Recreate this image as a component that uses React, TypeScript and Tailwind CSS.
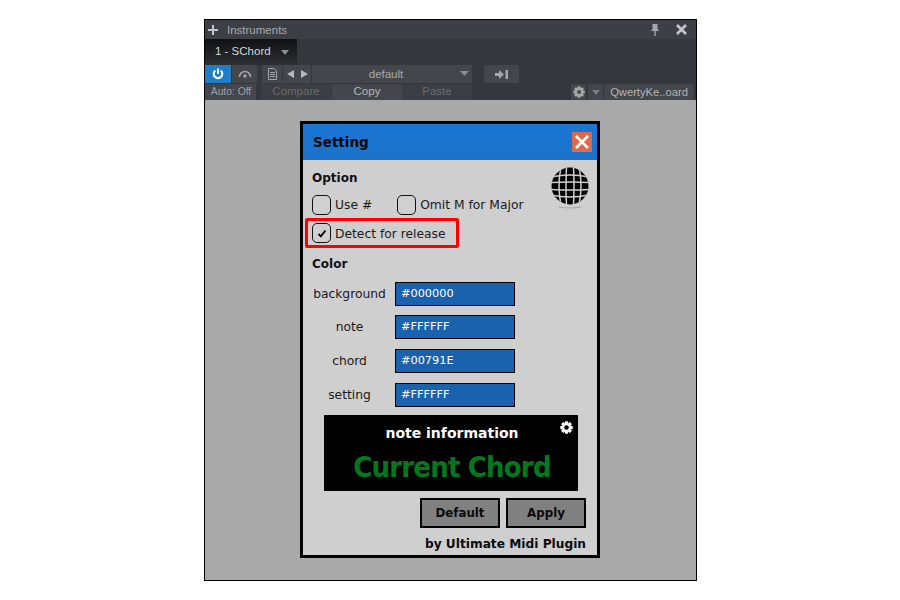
import React from 'react';

const ui = "font-['Liberation_Sans',Arial,sans-serif]";
const dv = "font-['DejaVu_Sans',Verdana,sans-serif]";

function Gear({ size, color }: { size: number; color: string }) {
  const teeth = [0, 45, 90, 135];
  return (
    <svg width={size} height={size} viewBox="0 0 24 24">
      {teeth.map((a) => (
        <rect key={a} x="9" y="0.5" width="6" height="23" rx="0.8" fill={color} transform={`rotate(${a} 12 12)`} />
      ))}
      <circle cx="12" cy="12" r="8.5" fill={color} />
      <circle cx="12" cy="12" r="4.2" fill="#000" fillOpacity={color === '#fff' ? 1 : 0.55} />
    </svg>
  );
}

function Globe() {
  return (
    <svg width="38" height="46" viewBox="0 0 38 46">
      <defs>
        <clipPath id="ball">
          <circle cx="19" cy="19" r="18.5" />
        </clipPath>
        <linearGradient id="refl" x1="0" y1="0" x2="0" y2="1">
          <stop offset="0" stopColor="#9a9a9a" />
          <stop offset="1" stopColor="#cfcfcf" />
        </linearGradient>
      </defs>
      <circle cx="19" cy="19" r="18.5" fill="#000" />
      <g clipPath="url(#ball)" fill="none" stroke="#cfcfcf" strokeWidth="1.500">
        <path d="M15.500 0Q14.500 19 15.500 38M22.500 0Q23.500 19 22.500 38" />
        <path d="M10 0Q6 19 10 38M28 0Q32 19 28 38" />
        <path d="M0 15.500Q19 14.500 38 15.500M0 22.500Q19 23.500 38 22.500" />
        <path d="M0 10Q19 6 38 10M0 28Q19 32 38 28" />
      </g>
      <path d="M8 40C14 41.500 24 41.500 30 40M11 43C16 44 22 44 27 43" stroke="url(#refl)" strokeWidth="1" fill="none" />
    </svg>
  );
}

function Check({ label, checked }: { label: string; checked?: boolean }) {
  return (
    <div className="flex items-center gap-[4px]">
      <div className="w-[19px] h-[20px] rounded-[5px] border border-[#111] bg-[#d0d0d0] flex items-center justify-center">
        {checked && (
          <svg width="10" height="9" viewBox="0 0 10 9">
            <path d="M1.500 5L3.800 7.300L8.500 1.500" stroke="#000" strokeWidth="1.800" fill="none" />
          </svg>
        )}
      </div>
      <span className="text-[12.3px] leading-[20px] pt-[1px] text-[#1a1a1a]">{label}</span>
    </div>
  );
}

function ColorRow({ label, value, mb }: { label: string; value: string; mb: string }) {
  return (
    <div className={`flex items-center ${mb}`}>
      <div className="w-[83px] pr-[8px] text-center text-[12.3px] text-[#1a1a1a]">{label}</div>
      <div className="w-[120px] h-[24px] bg-[#1a62ad] border border-black pl-[5px] pt-[1px] flex items-center text-[11.3px] text-white">
        {value}
      </div>
    </div>
  );
}

export default function App() {
  return (
    <div className="w-[900px] h-[600px] bg-white pt-[19px] pl-[204px] overflow-hidden">
      <div className={`w-[493px] h-[562px] border border-black flex flex-col bg-[#a9a9a9] ${ui}`}>
        {/* title bar */}
        <div className="h-[19px] bg-[#3c3f43] flex items-center pl-[3px] pr-[9px] text-[11.500px] text-[#a8abae]">
          <svg width="10" height="10" viewBox="0 0 10 10" className="mt-[1px]">
            <path d="M5 0V10M0 5H10" stroke="#c4c6c8" strokeWidth="2" />
          </svg>
          <span className="ml-[9px] mt-[2px]">Instruments</span>
          <svg width="10" height="12" viewBox="0 0 10 12" className="ml-auto mr-[16px]">
            <path d="M2.500 0H7.500V5L9 7H1L2.500 5ZM4.300 7H5.700V12H4.300Z" fill="#a5a7a9" />
          </svg>
          <svg width="11" height="11" viewBox="0 0 11 11">
            <path d="M1 1L10 10M10 1L1 10" stroke="#c4c6c8" strokeWidth="2.600" />
          </svg>
        </div>
        {/* tab row */}
        <div className="h-[26px] bg-[#34373b] flex items-start">
          <div className="w-[92px] h-[26px] bg-gradient-to-b from-[#111214] to-[#2c2f33] flex items-center pl-[10px] text-[11.500px] text-[#d8d9da]">
            1 - SChord
            <svg width="8" height="5" viewBox="0 0 8 5" className="ml-[10px]">
              <path d="M0 0H8L4 5Z" fill="#8b8d90" />
            </svg>
          </div>
        </div>
        {/* toolbar */}
        <div className="h-[18px] bg-[#34373b] flex items-stretch text-[11.500px] text-[#a8abae]">
          <div className="w-[26px] bg-[#1e7ec8] flex items-center justify-center">
            <svg width="12" height="12" viewBox="0 0 12 12" fill="none" stroke="#fff" strokeWidth="2">
              <path d="M6 0.500V6" />
              <path d="M3.300 2.500A4.300 4.300 0 1 0 8.700 2.500" />
            </svg>
          </div>
          <div className="w-[25px] ml-[1px] bg-[#43464a] flex items-center justify-center">
            <svg width="14" height="8" viewBox="0 0 14 8" fill="none">
              <path d="M1.500 7A5.500 5.500 0 0 1 12.500 7" stroke="#a5a7a9" strokeWidth="1.600" />
              <circle cx="7" cy="6" r="1.700" fill="#a5a7a9" />
            </svg>
          </div>
          <div className="w-[20px] ml-[5px] bg-[#43464a] flex items-center justify-center">
            <svg width="9" height="12" viewBox="0 0 9 12" fill="none" stroke="#a5a7a9">
              <path d="M0.500 0.500H6L8.500 3V11.500H0.500ZM2 4.500H7M2 6.500H7M2 8.500H7" />
            </svg>
          </div>
          <div className="w-[14px] ml-[1px] bg-[#43464a] flex items-center justify-center">
            <svg width="7" height="8" viewBox="0 0 7 8"><path d="M7 0V8L0 4Z" fill="#b5b7b9" /></svg>
          </div>
          <div className="w-[14px] bg-[#43464a] flex items-center justify-center">
            <svg width="7" height="8" viewBox="0 0 7 8"><path d="M0 0V8L7 4Z" fill="#b5b7b9" /></svg>
          </div>
          <div className="w-[160px] ml-[1px] pr-[12px] pt-[2px] bg-[#43464a] flex items-center justify-center relative">
            default
            <svg width="9" height="5" viewBox="0 0 9 5" className="absolute right-[3px] top-[6px]">
              <path d="M0 0H9L4.500 5Z" fill="#8b8d90" />
            </svg>
          </div>
          <div className="w-[35px] ml-[12px] bg-[#43464a] flex items-center justify-center">
            <svg width="14" height="9" viewBox="0 0 14 9">
              <path d="M0 3H4V0L9 4.500L4 9V6H0ZM10.500 0H13V9H10.500Z" fill="#a5a7a9" />
            </svg>
          </div>
        </div>
        <div className="h-[17px] bg-[#34373b] flex items-stretch pt-[1px] text-[11.500px] text-[#5f6266]">
          <div className="w-[51px] bg-[#43464a] text-[10.300px] text-[#a0a3a6] flex items-center justify-center pl-[1px]">Auto: Off</div>
          <div className="w-[70px] ml-[5px] bg-[#3b3e42] flex items-center justify-center text-[#696c70]">Compare</div>
          <div className="w-[70px] ml-[1px] bg-[#43464a] flex items-center justify-center text-[#b5b7b9]">Copy</div>
          <div className="w-[70px] bg-[#3b3e42] flex items-center justify-center text-[#696c70]">Paste</div>
          <div className="w-[15px] ml-[99px] bg-[#43464a] flex items-center justify-center">
            <Gear size={12} color="#a5a7a9" />
          </div>
          <div className="w-[15px] ml-[2px] bg-[#43464a] flex items-center justify-center">
            <svg width="8" height="5" viewBox="0 0 8 5"><path d="M0 0H8L4 5Z" fill="#7c7e81" /></svg>
          </div>
          <div className="w-[90px] ml-[1px] bg-[#43464a] flex items-center justify-center text-[11.200px] text-[#b5b7b9]">QwertyKe..oard</div>
        </div>

        {/* plugin area */}
        <div className="flex-1 pt-[21px] pl-[95px]">
          <div className={`w-[300px] h-[437px] border-[3px] border-black bg-[#cfcfcf] flex flex-col ${dv}`}>
            <div className="h-[36px] bg-gradient-to-b from-[#1a76d4] to-[#1a72ca] flex items-center justify-between pl-[10px] pr-[5px]">
              <span className="text-[13.500px] font-bold text-[#0a0a0a]">Setting</span>
              <div className="w-[20px] h-[20px] bg-[#de6a4b] flex items-center justify-center">
                <svg width="14" height="14" viewBox="0 0 14 14">
                  <path d="M1 1L13 13M13 1L1 13" stroke="#fff" strokeWidth="2.600" />
                </svg>
              </div>
            </div>

            <div className="flex-1 flex flex-col pl-[9px] pr-[11px]">
              <div className="flex justify-between items-start pt-[8px] h-[50px]">
                <div>
                  <div className="text-[12px] font-bold text-[#111] leading-[20px]">Option</div>
                  <div className="flex gap-[25px] mt-[6px]">
                    <Check label="Use #" />
                    <Check label="Omit M for Major" />
                  </div>
                </div>
                <div className="shrink-0 -mr-[3px] -mt-[1px]">
                  <Globe />
                </div>
              </div>
              <div className="mt-[8px] -ml-[7px] w-[154px] h-[30px] border-[3px] border-[#f00] rounded-[2px] pl-[4px] flex items-center">
                <Check label="Detect for release" checked />
              </div>
              <div className="text-[12px] font-bold text-[#111] leading-[20px] mt-[6px] mb-[8px]">Color</div>
              <ColorRow label="background" value="#000000" mb="mb-[9px]" />
              <ColorRow label="note" value="#FFFFFF" mb="mb-[10px]" />
              <ColorRow label="chord" value="#00791E" mb="mb-[10px]" />
              <ColorRow label="setting" value="#FFFFFF" mb="mb-[8px]" />

              <div className="relative ml-[12px] w-[254px] h-[76px] bg-black flex flex-col items-center pt-[8px] pl-[2px]">
                <div className="text-[14px] font-bold text-white leading-[20px]">note information</div>
                <div className="text-[29px] font-bold text-[#00791e] leading-[36px] mt-[6px] tracking-[-0.85px] font-['DejaVu_Sans_Condensed','DejaVu_Sans',sans-serif]">Current Chord</div>
                <div className="absolute right-[5px] top-[6px]">
                  <Gear size={13} color="#fff" />
                </div>
              </div>

              <div className="flex justify-end gap-[6px] mt-[7px]">
                <div className="w-[80px] h-[30px] bg-[#808080] border-[2px] border-black pt-[1px] flex items-center justify-center text-[11.800px] font-bold text-[#0a0a0a]">Default</div>
                <div className="w-[80px] h-[30px] bg-[#808080] border-[2px] border-black pt-[1px] flex items-center justify-center text-[11.800px] font-bold text-[#0a0a0a]">Apply</div>
              </div>
              <div className="text-right text-[12.200px] font-bold text-[#0a0a0a] mt-[7px]">by Ultimate Midi Plugin</div>
            </div>
          </div>
        </div>
      </div>
    </div>
  );
}
